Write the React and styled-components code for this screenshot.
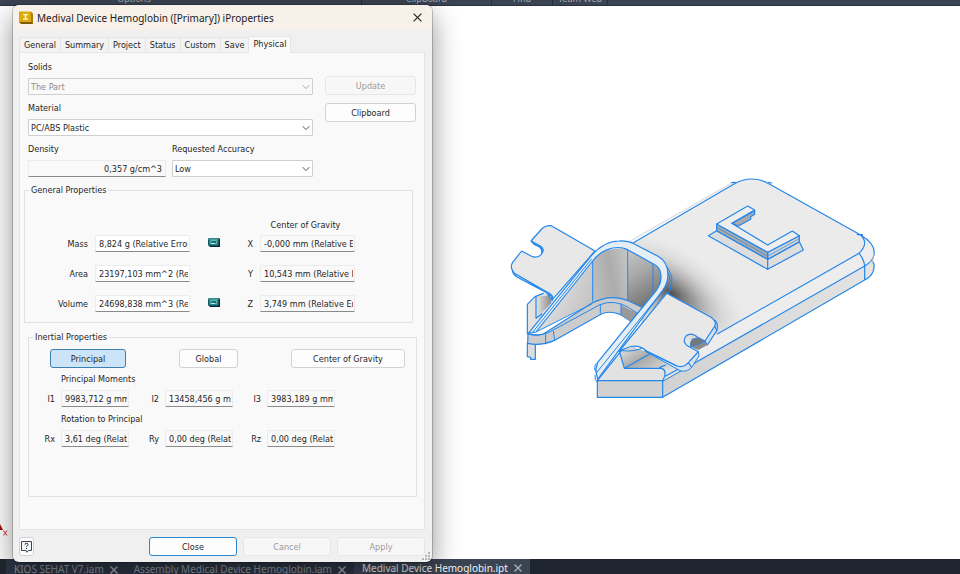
import React, { useState } from "react";
import styled, { createGlobalStyle, css } from "styled-components";

const GlobalStyle = createGlobalStyle`
  * {
    box-sizing: border-box;
  }

  body {
    margin: 0;
    overflow: hidden;
    font-family: "DejaVu Sans Condensed", "DejaVu Sans", sans-serif;
    font-size: 9px;
    line-height: 14px;
    color: #1f1f1f;
  }

  button, input, select {
    font: inherit;
    color: inherit;
    margin: 0;
  }
`;

const Page = styled.div`
  position: relative;
  display: flex;
  flex-direction: column;
  height: 100vh;
  background: #fff;
`;

const Ribbon = styled.header`
  display: grid;
  grid-template-columns: 268fr 94fr 130fr 61fr 55fr 352fr;
  height: 6px;
  background: #3b4453;
  border-bottom: 1px solid #2a313d;
  overflow: hidden;
`;

const RibbonGroup = styled.div`
  display: flex;
  align-items: flex-end;
  justify-content: center;
  height: 5px;
  border-right: ${(props) => (props.$line ? "1px solid #272e3a" : "none")};
  font-family: "Noto Sans", sans-serif;
  line-height: 12px;
  color: #a4abb6;
`;

const Viewport = styled.main`
  position: relative;
  flex: 1;
  display: grid;
  grid-template-columns: 505fr 376fr 79fr;
  align-items: center;

  .model {
    grid-column: 2;
    width: 100%;
    display: block;
  }

  .axis {
    position: absolute;
    left: 0;
    bottom: 22px;
    width: 10px;
    height: 14px;
  }
`;

const DocTabs = styled.nav`
  display: flex;
  height: 15px;
  padding-left: 6px;
  background: #20262f;
  overflow: hidden;
`;

const DocTab = styled.div`
  display: flex;
  align-items: flex-start;
  gap: 6px;
  height: 15px;
  padding: 0 8px;
  background: ${(props) => (props.$active ? "#3b4453" : "#2e3644")};
  font-family: "Noto Sans", sans-serif;
  font-size: 10px;
  line-height: ${(props) => (props.$active ? "18px" : "21px")};
  white-space: nowrap;

  a {
    color: ${(props) => (props.$active ? "#f1f2f4" : "#9097a2")};
    text-decoration: none;
  }

  button {
    display: flex;
    align-items: center;
    height: ${(props) => (props.$active ? "18px" : "21px")};
    padding: 0;
    border: 0;
    background: none;
    color: #a4abb6;
  }
`;

const Dialog = styled.section`
  position: absolute;
  top: 5px;
  left: 13px;
  width: 419px;
  max-width: calc(100vw - 26px);
  background: #f0f0f0;
  border-radius: 6px;
  box-shadow: 0 0 0 1px rgba(0, 0, 0, 0.2), 0 10px 28px rgba(0, 0, 0, 0.45);
  overflow: hidden;
`;

const TitleBar = styled.div`
  display: flex;
  align-items: center;
  gap: 4px;
  height: 25px;
  padding: 0 10px 0 6px;
  background: #f8f1ea;

  h1 {
    flex: 1;
    margin: 0;
    font-family: "Noto Sans", sans-serif;
    font-size: 10px;
    font-weight: 400;
    color: #1b1b1b;
  }

  button {
    display: flex;
    padding: 0;
    border: 0;
    background: none;
  }
`;

const DialogBody = styled.div`
  padding: 5px 7px 6px 6px;
`;

const TabStrip = styled.div`
  display: flex;
  align-items: flex-end;
  height: 17px;
`;

const Tab = styled.button`
  height: 15px;
  padding: 0 4px;
  border: 1px solid #e5e5e5;
  border-width: 1px 1px 0 0;
  background: #f3f3f3;

  &:first-child {
    border-left-width: 1px;
  }

  ${(props) =>
    props.$active &&
    css`
      position: relative;
      height: 17px;
      padding-bottom: 2px;
      background: #f9f9f9;
      margin-bottom: -1px;
    `}
`;

const Panel = styled.div`
  height: 478px;
  padding: 7px 7px 0 4px;
  background: #f9f9f9;
  border: 1px solid #e5e5e5;
`;

const MaterialArea = styled.div`
  display: flex;
  gap: 12px;
  padding: 0 1px 0 4px;
`;

const Fields = styled.div`
  flex: 1;
  display: flex;
  flex-direction: column;
  gap: 6px;
`;

const SideButtons = styled.div`
  display: flex;
  flex-direction: column;
  gap: 8px;
  width: 91px;
  padding-top: 16px;
`;

const FieldRow = styled.div`
  display: grid;
  grid-template-columns: 138fr 141fr;
  gap: 6px;
`;

const Field = styled.div`
  display: flex;
  flex-direction: column;
  gap: 4px;
`;

const SelectBox = styled.div`
  position: relative;
  color: ${(props) => (props.$disabled ? "#8c8c8c" : "#1f1f1f")};

  select {
    appearance: none;
    display: block;
    width: 100%;
    height: 17px;
    padding: 0 16px 0 2px;
    border: 1px solid #cfcfcf;
    border-radius: 1px;
    background: ${(props) => (props.$disabled ? "#f9f9f9" : "#fff")};
    opacity: 1;
  }

  svg {
    position: absolute;
    right: 3px;
    top: 6px;
    opacity: 0.75;
    pointer-events: none;
  }
`;

const TextBox = styled.input`
  width: 100%;
  min-width: 0;
  height: 17px;
  padding: 0 ${(props) => (props.$right ? "3px" : "1px")} 0 3px;
  border: 1px solid #ececec;
  border-bottom-color: #8a8a8a;
  border-radius: 1px;
  background: ${(props) => (props.$white ? "#fff" : "#f9f9f9")};
  text-align: ${(props) => (props.$right ? "right" : "left")};
  outline: none;
`;

const Button = styled.button`
  height: 19px;
  padding: 0;
  border: 1px solid #d2d2d2;
  border-radius: 3px;
  background: #fdfdfd;

  &:disabled {
    color: #9a9a9a;
    border-color: #e6e6e6;
    background: #f7f7f7;
  }

  ${(props) =>
    props.$pressed &&
    css`
      background: #cce4f7;
      border-color: #3c7fb1;
    `}

  ${(props) =>
    props.$primary &&
    css`
      border-color: #2b88d0;
    `}
`;

const Group = styled.fieldset`
  min-width: 0;
  margin: 0;
  border: 1px solid #e2e2e2;

  legend {
    margin-left: 4px;
    padding: 0 2px;
  }
`;

const GeneralGroup = styled(Group)`
  margin: 6px 4px 0 0;
  padding: 21px 0 10px;
`;

const InertialGroup = styled(Group)`
  margin: 7px 0 0 4px;
  padding: 5px 0 48px;
`;

const GeneralGrid = styled.div`
  display: grid;
  grid-template-columns: 63px 95px 34px 15px 95px;
  column-gap: 7px;
  row-gap: 13px;
  align-items: center;

  label {
    text-align: right;
  }

  svg {
    justify-self: center;
    margin-bottom: 3px;
  }
`;

const GravityHeading = styled.div`
  width: 95px;
  margin: 0 0 3px 235px;
  padding-right: 4px;
  text-align: center;
  white-space: nowrap;
`;

const ModeButtons = styled.div`
  display: grid;
  grid-template-columns: 76px 59px 114px;
  column-gap: 53px;
  padding-left: 21px;
`;

const MomentBlock = styled.div`
  margin-top: 4px;

  h2 {
    margin: 0 0 4px 32px;
    font-size: 9px;
    font-weight: 400;
  }
`;

const MomentRow = styled.div`
  display: grid;
  grid-template-columns: 26px 68px 24px 68px 22px 68px;
  column-gap: 6px;

  label {
    text-align: right;
    line-height: 18px;
  }
`;

const Footer = styled.footer`
  display: flex;
  gap: 6px;
  padding-top: 7px;

  ${Button} {
    width: 88px;
  }

  ${Button}.help {
    display: flex;
    align-items: center;
    justify-content: center;
    width: 15px;
    margin-right: auto;
  }
`;

const Grip = styled.svg`
  position: absolute;
  right: 2px;
  bottom: 2px;
`;

function CrossIcon({ size = 8, width = 1 }) {
  return (
    <svg width={size} height={size} viewBox="0 0 8 8" aria-hidden="true">
      <path d="M0.5 0.5 7.5 7.5M7.5 0.5 0.5 7.5" stroke="currentColor" strokeWidth={width} fill="none" />
    </svg>
  );
}

function CalculatorIcon() {
  return (
    <svg width="12" height="9" viewBox="0 0 12 9" aria-hidden="true">
      <path d="M1 0H11L12 1V9H2L0 7V1Z" fill="#0b2443" />
      <path d="M0.5 0.5H10.5V7.5H0.5Z" fill="#1d8a88" />
      <path d="M0.5 1H10.5" stroke="#65b9ae" />
      <path d="M3 2.5H8.5V5.5H3Z" fill="#167074" stroke="#7cc8bd" strokeWidth="0.7" />
      <path d="M3 5.5H7" stroke="#d6f4e9" strokeWidth="0.8" />
    </svg>
  );
}

function InventorIcon() {
  return (
    <svg width="14" height="14" viewBox="0 0 14 14" aria-hidden="true">
      <path d="M0 1H11L14 3V13H2L0 11Z" fill="#7d5a00" />
      <path d="M0 0.5H12V11H0Z" fill="#dca90e" />
      <path d="M12 0.5 14 3V13L12 11Z" fill="#a87c05" />
      <path d="M4 3H9V4.2H7.2V7.5H9V8.7H4V7.5H5.8V4.2H4Z" fill="#fff7d5" />
    </svg>
  );
}

function Select({ id, label, options, disabled }) {
  return (
    <Field>
      <label htmlFor={id}>{label}</label>
      <SelectBox $disabled={disabled}>
        <select id={id} disabled={disabled}>
          {options.map((option) => (
            <option key={option}>{option}</option>
          ))}
        </select>
        <svg width="8" height="6" viewBox="0 0 8 6" aria-hidden="true">
          <path d="M0.7 1.2 4 4.6 7.3 1.2" stroke="currentColor" fill="none" />
        </svg>
      </SelectBox>
    </Field>
  );
}

// Isometric view of the part
function Model() {
  return (
    <svg className="model" viewBox="15 -15 1128 708" role="img" aria-label="Part model">
      <defs>
        <radialGradient id="shade" gradientUnits="userSpaceOnUse" cx="0" cy="0" r="1" gradientTransform="translate(515 370) rotate(35) scale(270 135)">
          <stop offset="0" stopColor="#4a4a4a" stopOpacity="0.95" />
          <stop offset="0.3" stopColor="#6a6a6a" stopOpacity="0.6" />
          <stop offset="0.65" stopColor="#999" stopOpacity="0.22" />
          <stop offset="1" stopColor="#ccc" stopOpacity="0" />
        </radialGradient>
        <linearGradient id="wallLeft" x1="0.2" x2="1" y1="0.2" y2="0.6">
          <stop offset="0" stopColor="#e6e6e6" />
          <stop offset="1" stopColor="#c2c2c2" />
        </linearGradient>
        <linearGradient id="wallMid" x1="0" x2="1" y1="0.5" y2="0.2">
          <stop offset="0" stopColor="#bcbcbc" />
          <stop offset="0.5" stopColor="#acacac" />
          <stop offset="1" stopColor="#c4c4c4" />
        </linearGradient>
        <linearGradient id="wallRight" x1="0" x2="0.3" y1="0" y2="1">
          <stop offset="0" stopColor="#c9c9c9" />
          <stop offset="0.45" stopColor="#a6a6a6" />
          <stop offset="1" stopColor="#6d6d6d" />
        </linearGradient>
        <linearGradient id="side" x1="0" x2="1">
          <stop offset="0" stopColor="#cfcfcf" />
          <stop offset="1" stopColor="#e4e4e4" />
        </linearGradient>
        <linearGradient id="pocket" x1="0" x2="1" y1="0" y2="0.6">
          <stop offset="0" stopColor="#e6e6e6" />
          <stop offset="0.5" stopColor="#a8a8a8" />
          <stop offset="1" stopColor="#dcdcdc" />
        </linearGradient>
        <linearGradient id="underTab" x1="0" x2="1">
          <stop offset="0" stopColor="#e2e2e2" />
          <stop offset="1" stopColor="#888" />
        </linearGradient>
      </defs>
      <g stroke="#2487ea" strokeWidth="3.6" strokeLinejoin="round" strokeLinecap="round" fill="#e8e8e8">
        {/* plate */}
        <path d="M390 214 697 38" stroke="#e4e4e4" strokeWidth="5" />
        <path d="M400 218 702 42Q755 12 808 42L1082 195Q1128 222 1122 255V290Q1122 315 1094 330L488 682V600L430 500Z" fill="url(#side)" stroke="none" />
        <path d="M1082 195Q1128 222 1122 255Q1118 275 1094 288L488 634 420 560 640 470Z" fill="#ededed" stroke="none" />
        <path d="M400 218 702 42Q755 12 808 42L1082 195Q1108 220 1077 250L652 492 450 560Z" stroke="none" fill="#ebebeb" />
        <path d="M400 218 702 42Q755 12 808 42L1082 195Q1108 220 1077 250L652 492 450 560Z" stroke="none" fill="url(#shade)" />
        <path d="M400 218 702 42Q755 12 808 42L1082 195Q1108 220 1077 250L652 492" fill="none" />
        <path d="M1082 195Q1128 222 1122 255Q1118 275 1094 288L488 634M1077 250Q1092 268 1094 288V330M1119 277Q1124 284 1122 290Q1122 315 1094 330L488 682M695 38 706 37M806 37 815 39M1072 194H1088" fill="none" />
        <path d="M1122 255Q1115 270 1119 277" fill="none" stroke="#bbb" />

        {/* L shaped boss */}
        <path d="M650 182 625 197 803 298 910 240 898 215 803 268Z" fill="#ddd" />
        <path d="M650 162V182L803 268 898 215V197L803 247Z" fill="#aaa" />
        <path d="M803 247V268L898 215V197Z" fill="#d3d3d3" />
        <path d="M697 160 764 122V133L752 140V148L715 168Z" fill="#aaa" />
        <path d="M650 162 743 108 764 120 695 160 803 225 877 183 898 197 803 247Z" fill="#eee" />
        <path d="M803 247V298" />
        <path d="M650 172 803 258 898 206" fill="none" strokeWidth="2" />

        {/* left support and stub */}
        <path d="M82 492V403L105 380 135 368 156 385 140 425 90 490Z" fill="#e2e2e2" stroke="none" />
        <path d="M110 380 150 376 155 398 110 445Z" fill="url(#underTab)" stroke="none" />
        <path d="M82 492V403L105 380 130 370M108 380V445L126 432" fill="none" />
        <path d="M82 520V560L92 562V568H106V520Z" fill="#ddd" />

        {/* left tab */}
        <path d="M38 297Q36 312 52 322L140 368 157 392 155 378 42 307Z" fill="#b9d7f2" />
        <path d="M93 213 125 177Q137 165 154 167L285 243 158 388Q160 378 150 371L42 309Q28 292 38 277L65 243 93 258Q112 267 123 254Q138 237 120 227Z" />
        <path d="M95 214 102 222 121 232Q128 240 126 248" fill="none" strokeWidth="5" />

        {/* pocket wall */}
        <path d="M100 490 278 268V398Z" fill="url(#wallLeft)" stroke="none" />
        <path d="M278 268Q320 228 383 236V394Q330 374 278 398Z" fill="url(#wallMid)" stroke="none" />
        <path d="M383 236 462 280Q486 295 481 330Q480 350 455 375L410 435 383 394Z" fill="url(#wallRight)" stroke="none" />
        <path d="M278 270V393M383 238V392M459 282V374" fill="none" strokeWidth="3" />
        {/* pocket floor ledge */}
        <path d="M84 490Q105 500 130 492L275 400Q330 370 385 392L430 414 396 456 360 433Q325 420 300 434L162 512Q122 529 83 520Z" fill="#ccc" />
        <path d="M363 406 415 432 396 456 363 434Z" fill="#999" stroke="none" />
        <path d="M90 493Q120 498 145 488L300 404Q340 387 385 412L415 432M137 494V522M160 484 164 511M301 406V430M363 402V432M110 485 275 402" fill="none" strokeWidth="3" />

        {/* rim of the pocket */}
        <path d="M85 490 270 262Q310 213 357 213Q385 212 403 222L474 259Q508 278 503 325Q500 348 480 372L293 628 287 600 293 577 455 378Q482 350 483 325Q485 295 462 283L383 239Q355 226 322 239Q296 249 278 273L108 486Z" fill="#e5edf5" />
        <path d="M97 488 274 268M500 290Q520 318 515 338L510 362Q498 378 480 397L295 630M505 310Q514 325 507 350M292 605 478 375M293 577Q283 582 284 600L292 605M285 615Q282 628 292 638" fill="none" strokeWidth="3" />

        {/* front base */}
        <path d="M292 632 358 548 373 595 545 600 488 632Z" fill="#e2e2e2" stroke="none" />
        <path d="M358 543 400 530 440 545 540 600 488 598 373 595Z" fill="url(#pocket)" stroke="none" />
        <path d="M292 632H488V682H292Z" fill="#d1d1d1" />
        <path d="M292 632 480 397M358 543 373 595H485Q504 602 488 632M373 595 450 551M479 592 497 585M497 618 540 595" fill="none" />

        {/* right tab */}
        <path d="M435 543 540 602Q560 608 575 592L597 558 595 545 565 578 532 588Z" fill="#d6e2ed" strokeWidth="3" />
        <path d="M615 513 622 525 650 482Q656 465 646 452Z" fill="#d6e2ed" />
        <path d="M575 505 614 514 622 525 595 540 572 530Z" fill="#8a8a8a" stroke="none" />
        <path d="M500 370 633 442Q651 454 644 469L615 513 594 503Q574 485 558 498Q546 513 560 526L595 545 565 578Q552 594 532 588L440 543Q410 518 375 536L358 543 480 394Z" />
        <path d="M594 503Q574 505 571 520L572 531 595 522 614 514Z" fill="#777" strokeWidth="2.4" />
        <path d="M565 578 574 591M644 469 651 482" fill="none" />
        <path d="M365 542Q403 546 425 535" fill="none" strokeWidth="3" />
      </g>
    </svg>
  );
}

const tabs = ["General", "Summary", "Project", "Status", "Custom", "Save", "Physical"];

const generalRows = [
  { name: "Mass", value: "8,824 g (Relative Error", axis: "X", cog: "-0,000 mm (Relative Error", calc: true },
  { name: "Area", value: "23197,103 mm^2 (Relative", axis: "Y", cog: "10,543 mm (Relative Error" },
  { name: "Volume", value: "24698,838 mm^3 (Relative", axis: "Z", cog: "3,749 mm (Relative Error", calc: true },
];

const moments = [
  ["I1", "9983,712 g mm^2"],
  ["I2", "13458,456 g mm^2"],
  ["I3", "3983,189 g mm^2"],
];

const rotations = [
  ["Rx", "3,61 deg (Relative"],
  ["Ry", "0,00 deg (Relative"],
  ["Rz", "0,00 deg (Relative"],
];

function Moments({ title, items }) {
  return (
    <MomentBlock>
      <h2>{title}</h2>
      <MomentRow>
        {items.map(([name, value]) => (
          <React.Fragment key={name}>
            <label htmlFor={name}>{name}</label>
            <TextBox id={name} defaultValue={value} readOnly />
          </React.Fragment>
        ))}
      </MomentRow>
    </MomentBlock>
  );
}

function PropertiesDialog() {
  const [tab, setTab] = useState("Physical");
  const [mode, setMode] = useState("Principal");

  return (
    <Dialog role="dialog" aria-labelledby="dialog-title">
      <TitleBar>
        <InventorIcon />
        <h1 id="dialog-title">Medival Device Hemoglobin ([Primary]) iProperties</h1>
        <button aria-label="Close window">
          <CrossIcon size={9} />
        </button>
      </TitleBar>
      <DialogBody>
        <TabStrip role="tablist">
          {tabs.map((name) => (
            <Tab key={name} role="tab" aria-selected={tab === name} $active={tab === name} onClick={() => setTab(name)}>
              {name}
            </Tab>
          ))}
        </TabStrip>
        <Panel>
          <MaterialArea>
            <Fields>
              <Select id="solids" label="Solids" options={["The Part"]} disabled />
              <Select id="material" label="Material" options={["PC/ABS Plastic"]} />
              <FieldRow>
                <Field>
                  <label htmlFor="density">Density</label>
                  <TextBox id="density" defaultValue="0,357 g/cm^3" readOnly $right />
                </Field>
                <Select id="accuracy" label="Requested Accuracy" options={["Low"]} />
              </FieldRow>
            </Fields>
            <SideButtons>
              <Button disabled>Update</Button>
              <Button>Clipboard</Button>
            </SideButtons>
          </MaterialArea>

          <GeneralGroup>
            <legend>General Properties</legend>
            <GravityHeading>Center of Gravity</GravityHeading>
            <GeneralGrid>
              {generalRows.map((row) => (
                <React.Fragment key={row.name}>
                  <label htmlFor={row.name}>{row.name}</label>
                  <TextBox id={row.name} defaultValue={row.value} $white />
                  {row.calc ? <CalculatorIcon /> : <span />}
                  <label htmlFor={row.axis}>{row.axis}</label>
                  <TextBox id={row.axis} defaultValue={row.cog} readOnly />
                </React.Fragment>
              ))}
            </GeneralGrid>
          </GeneralGroup>

          <InertialGroup>
            <legend>Inertial Properties</legend>
            <ModeButtons>
              {["Principal", "Global", "Center of Gravity"].map((name) => (
                <Button key={name} $pressed={mode === name} onClick={() => setMode(name)}>
                  {name}
                </Button>
              ))}
            </ModeButtons>
            <Moments title="Principal Moments" items={moments} />
            <Moments title="Rotation to Principal" items={rotations} />
          </InertialGroup>
        </Panel>
        <Footer>
          <Button className="help" aria-label="Help">
            <svg width="11" height="12" viewBox="0 0 11 12" aria-hidden="true">
              <path d="M0.5 0.5H10.5V9.5H7.5L6 11.3 5.2 9.5H0.5Z" fill="#f4f7fa" stroke="#3b4350" />
              <path d="M4 3.6Q4 2.3 5.5 2.3T7 3.6Q7 4.3 6.2 4.8T5.5 6M5.5 7V8" fill="none" stroke="#222" />
            </svg>
          </Button>
          <Button $primary>Close</Button>
          <Button disabled>Cancel</Button>
          <Button disabled>Apply</Button>
        </Footer>
      </DialogBody>
      <Grip width="8" height="8" viewBox="0 0 8 8" fill="#b5b5b5" aria-hidden="true">
        <path d="M6 0h2v2h-2zM3 3h2v2h-2zM6 3h2v2h-2zM0 6h2v2h-2zM3 6h2v2h-2zM6 6h2v2h-2z" />
      </Grip>
    </Dialog>
  );
}

const documents = ["KIOS SEHAT V7.iam", "Assembly Medical Device Hemoglobin.iam", "Medival Device Hemoglobin.ipt"];

export default function App() {
  return (
    <Page>
      <GlobalStyle />
      <Ribbon>
        <RibbonGroup>Options</RibbonGroup>
        <RibbonGroup $line />
        <RibbonGroup $line>Clipboard</RibbonGroup>
        <RibbonGroup $line>Find</RibbonGroup>
        <RibbonGroup $line>Team Web</RibbonGroup>
      </Ribbon>
      <Viewport>
        <Model />
        <svg className="axis" viewBox="0 0 10 14" aria-hidden="true">
          <path d="M0 1 3 7 0 7Z" fill="#9c1010" />
          <path d="M3.5 7.5 7 12.5M7 7.5 3.5 12.5" stroke="#e03030" fill="none" />
        </svg>
      </Viewport>
      <DocTabs>
        {documents.map((name, index) => (
          <DocTab key={name} $active={index === 2}>
            <a href="#">{name}</a>
            <button aria-label={"Close " + name}>
              <CrossIcon width={1.4} />
            </button>
          </DocTab>
        ))}
      </DocTabs>
      <PropertiesDialog />
    </Page>
  );
}
